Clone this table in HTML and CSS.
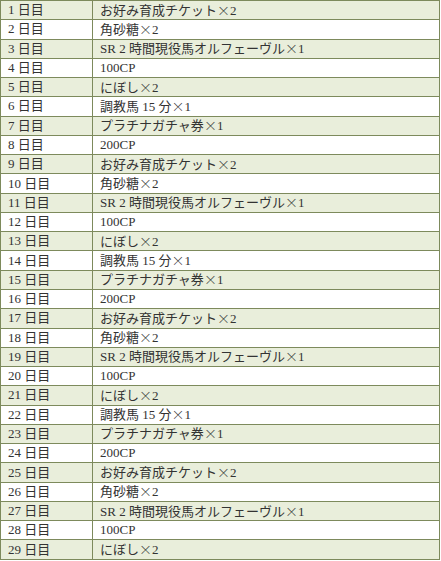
FILE: index.html
```html
<!DOCTYPE html>
<html lang="ja">
<head>
<meta charset="utf-8">
<link rel="stylesheet" href="styles.css">
</head>
<body>
<table class="bonus">
<tbody>
<tr class="alt"><td class="day">1 日目</td><td>お好み育成チケット<span class="x">×</span>2</td></tr>
<tr><td class="day">2 日目</td><td>角砂糖<span class="x">×</span>2</td></tr>
<tr class="alt"><td class="day">3 日目</td><td>SR 2 時間現役馬オルフェーヴル<span class="x">×</span>1</td></tr>
<tr><td class="day">4 日目</td><td>100CP</td></tr>
<tr class="alt"><td class="day">5 日目</td><td>にぼし<span class="x">×</span>2</td></tr>
<tr><td class="day">6 日目</td><td>調教馬 15 分<span class="x">×</span>1</td></tr>
<tr class="alt"><td class="day">7 日目</td><td>プラチナガチャ券<span class="x">×</span>1</td></tr>
<tr><td class="day">8 日目</td><td>200CP</td></tr>
<tr class="alt"><td class="day">9 日目</td><td>お好み育成チケット<span class="x">×</span>2</td></tr>
<tr><td class="day">10 日目</td><td>角砂糖<span class="x">×</span>2</td></tr>
<tr class="alt"><td class="day">11 日目</td><td>SR 2 時間現役馬オルフェーヴル<span class="x">×</span>1</td></tr>
<tr><td class="day">12 日目</td><td>100CP</td></tr>
<tr class="alt"><td class="day">13 日目</td><td>にぼし<span class="x">×</span>2</td></tr>
<tr><td class="day">14 日目</td><td>調教馬 15 分<span class="x">×</span>1</td></tr>
<tr class="alt"><td class="day">15 日目</td><td>プラチナガチャ券<span class="x">×</span>1</td></tr>
<tr><td class="day">16 日目</td><td>200CP</td></tr>
<tr class="alt"><td class="day">17 日目</td><td>お好み育成チケット<span class="x">×</span>2</td></tr>
<tr><td class="day">18 日目</td><td>角砂糖<span class="x">×</span>2</td></tr>
<tr class="alt"><td class="day">19 日目</td><td>SR 2 時間現役馬オルフェーヴル<span class="x">×</span>1</td></tr>
<tr><td class="day">20 日目</td><td>100CP</td></tr>
<tr class="alt"><td class="day">21 日目</td><td>にぼし<span class="x">×</span>2</td></tr>
<tr><td class="day">22 日目</td><td>調教馬 15 分<span class="x">×</span>1</td></tr>
<tr class="alt"><td class="day">23 日目</td><td>プラチナガチャ券<span class="x">×</span>1</td></tr>
<tr><td class="day">24 日目</td><td>200CP</td></tr>
<tr class="alt"><td class="day">25 日目</td><td>お好み育成チケット<span class="x">×</span>2</td></tr>
<tr><td class="day">26 日目</td><td>角砂糖<span class="x">×</span>2</td></tr>
<tr class="alt"><td class="day">27 日目</td><td>SR 2 時間現役馬オルフェーヴル<span class="x">×</span>1</td></tr>
<tr><td class="day">28 日目</td><td>100CP</td></tr>
<tr class="alt"><td class="day">29 日目</td><td>にぼし<span class="x">×</span>2</td></tr>
</tbody>
</table>
</body>
</html>
```
FILE: styles.css
```css
html, body {
  margin: 0;
  padding: 0;
  background: #ffffff;
}
.bonus {
  border-collapse: collapse;
  width: 440px;
  table-layout: fixed;
  font-family: "Liberation Serif", "Noto Sans CJK JP", serif;
  font-size: 13px;
  color: #333333;
}
.bonus td {
  border: 1px solid #7d8a5c;
  height: 18.28px;
  padding: 0 0 0 7px;
  line-height: 14px;
  white-space: nowrap;
  overflow: hidden;
  vertical-align: middle;
}
.bonus td.day {
  width: 92px;
  box-sizing: border-box;
}
.bonus tr.alt td {
  background: #e9eedb;
}
.bonus .x {
  font-family: "Noto Sans CJK JP", sans-serif;
  font-weight: 300;
  line-height: 14px;
}
```
